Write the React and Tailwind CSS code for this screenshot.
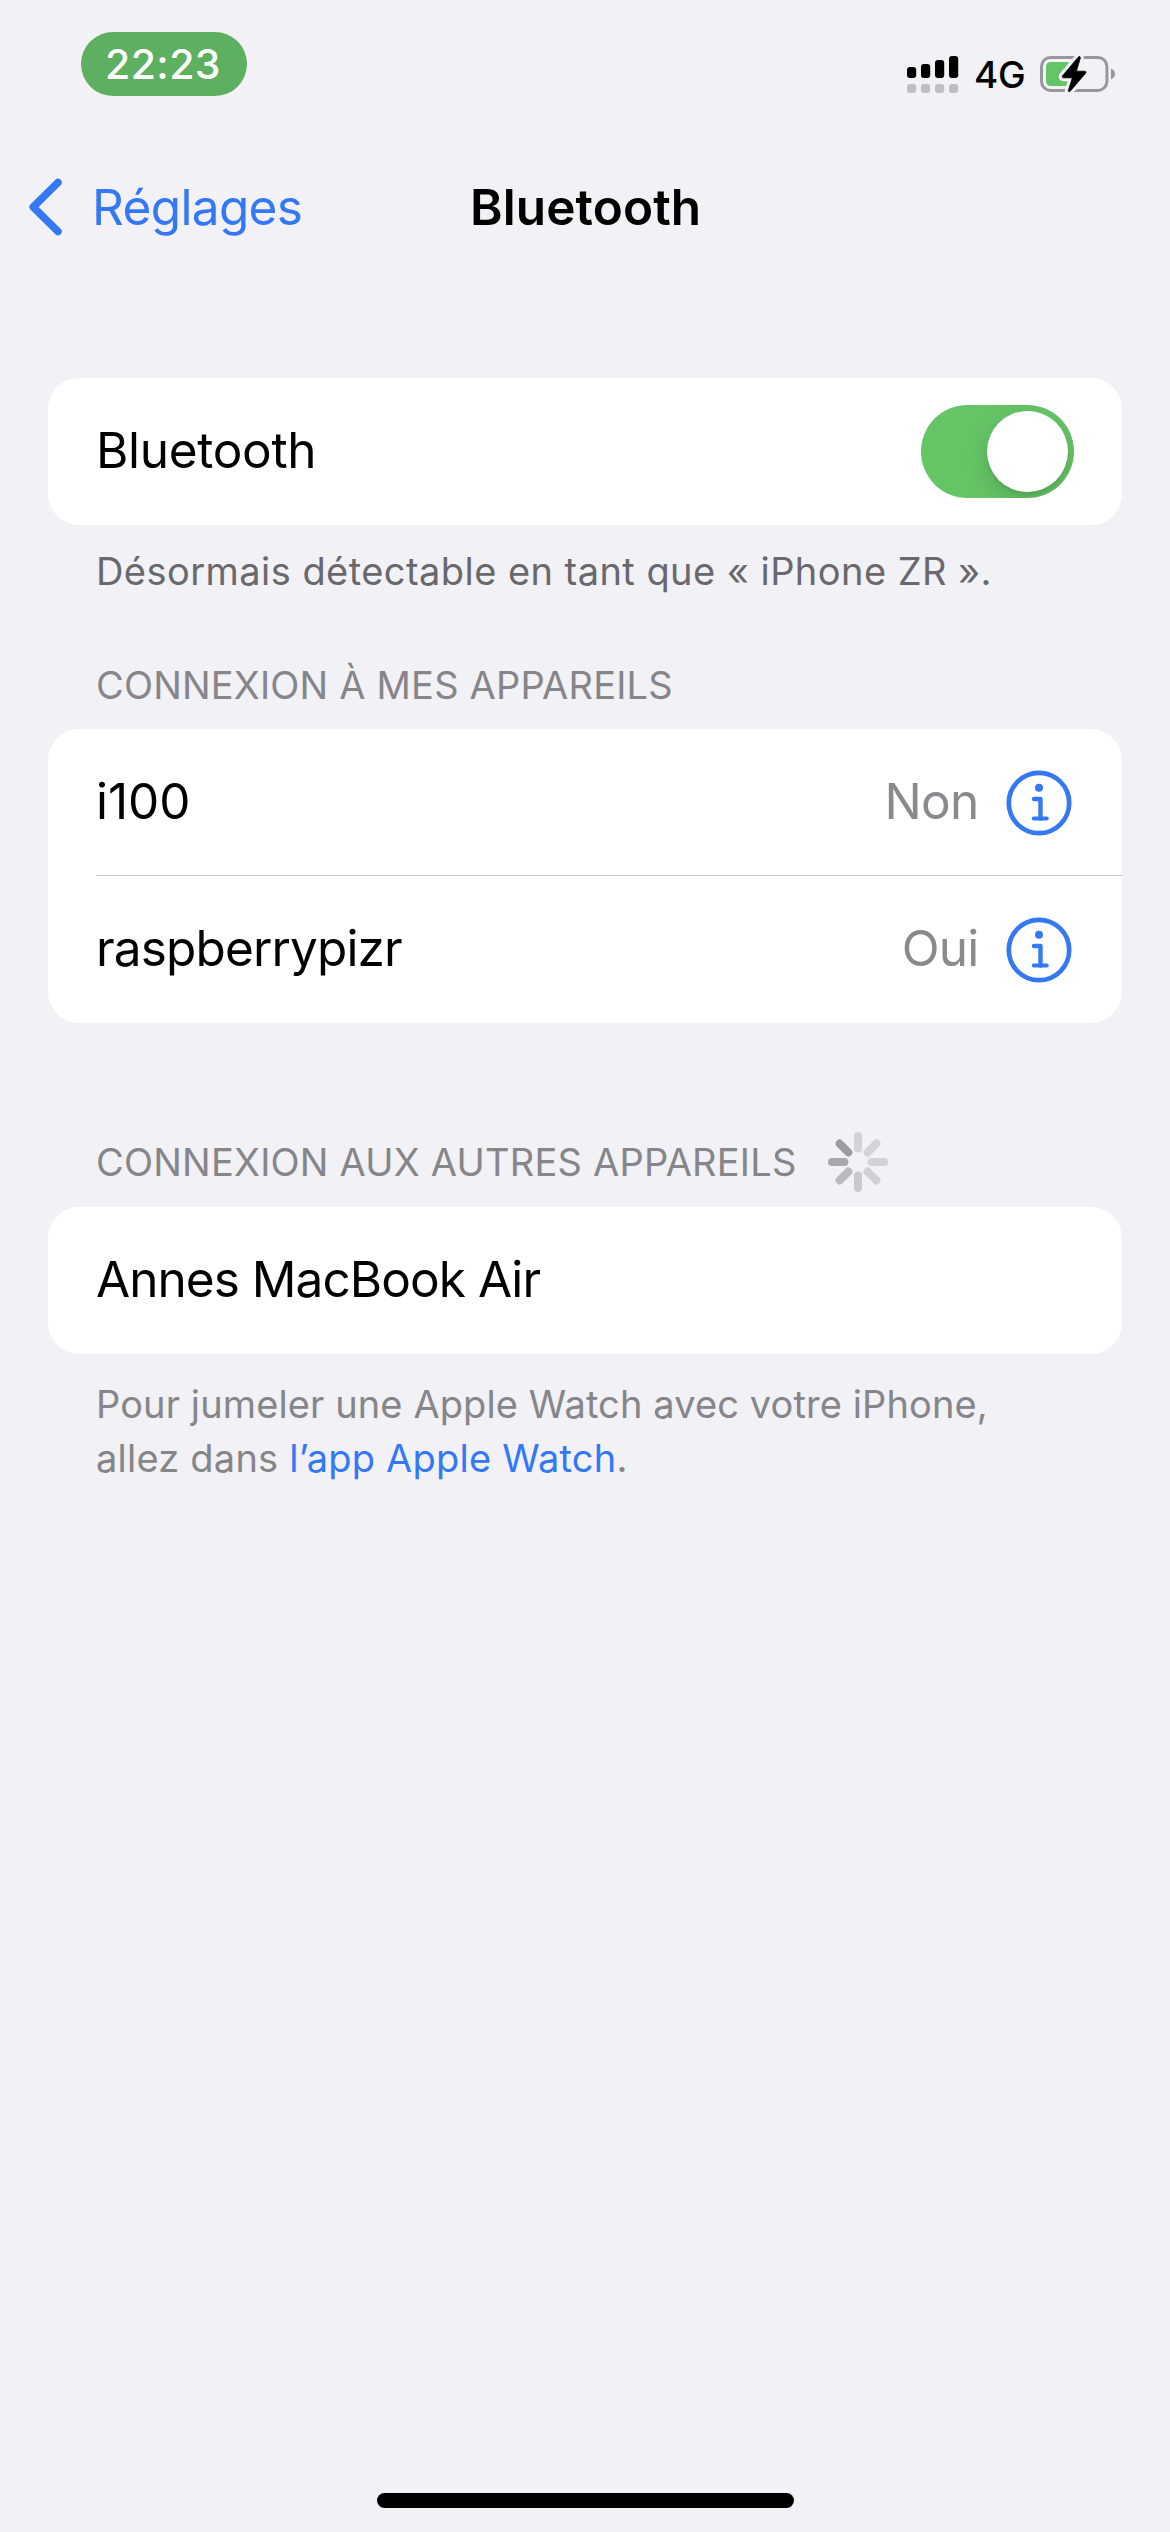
import React from "react";

function SignalIcon() {
  const tops = [67, 64, 60, 56];
  return (
    <svg className="block h-[38px] w-[52px]" viewBox="907 55 52 38">
      {tops.map((top, i) => (
        <g key={top}>
          <rect x={907 + i * 14} y={top} width="9.2" height={78 - top} rx="3" fill="#000" />
          <rect x={907 + i * 14} y="84" width="9.2" height="9" rx="3" fill="#bfbec3" />
        </g>
      ))}
    </svg>
  );
}

function BatteryIcon() {
  const bolt = "M1078.6 56.8 L1062.3 76 Q1061.8 77.6 1063.4 77.8 L1072.4 77.8 L1068.3 90.6 Q1068.6 92.4 1070 91.4 L1085.8 73 Q1086.4 71.4 1084.8 71.2 L1076.4 71.2 L1080.4 57.8 Q1080 55.6 1078.6 56.8 Z";
  return (
    <svg className="block h-10 w-[76px]" viewBox="1040 54 76 40">
      <rect x="1041.5" y="57.4" width="65.4" height="33" rx="9" fill="none" stroke="#98979d" strokeWidth="3" />
      <rect x="1046" y="62" width="26" height="24" rx="4.5" fill="#65c466" />
      <path d="M1111 68.6 Q1115 70.6 1115 74 Q1115 77.4 1111 79.4 Z" fill="#98979d" />
      <path d={bolt} fill="#f1f1f6" stroke="#f1f1f6" strokeWidth="7" strokeLinejoin="round" />
      <path d={bolt} fill="#000" stroke="#000" strokeWidth="0.8" strokeLinejoin="round" />
    </svg>
  );
}

function InfoIcon() {
  return (
    <svg className="block size-[66px]" viewBox="0 0 66 66" fill="none" stroke="#3478f6" strokeLinecap="round" strokeLinejoin="round">
      <circle cx="33" cy="33" r="30.2" strokeWidth="4.7" />
      <circle cx="33" cy="17.7" r="4" fill="#3478f6" stroke="none" />
      <path d="M28 29 H34.5 V48.5" strokeWidth="4.4" />
      <path d="M27.7 48.6 H40.7" strokeWidth="4" />
    </svg>
  );
}

function Spinner() {
  const colors = ["#d3d2d7", "#d3d2d7", "#d3d2d7", "#d1d0d5", "#c9c8cd", "#bab9be", "#a9a8ad", "#9c9ba0"];
  return (
    <svg className="block size-[60px]" viewBox="-30 -30 60 60">
      {colors.map((c, i) => (
        <rect key={i} x="-4" y="-30" width="8" height="20.4" rx="4" fill={c} transform={`rotate(${i * 45})`} />
      ))}
    </svg>
  );
}

function DeviceRow({ name, status, nameClass, statusClass }) {
  return (
    <div className="flex h-[147px] items-center pr-[50.5px] pl-12">
      <span className={nameClass}>{name}</span>
      <span className={statusClass}>{status}</span>
      <InfoIcon />
    </div>
  );
}

export default function App() {
  return (
    <div className="flex h-[2532px] w-[1170px] flex-col overflow-hidden bg-[#f1f1f6] font-['Inter',sans-serif] text-[49.5px] leading-[60px] whitespace-nowrap text-black">
      <header className="flex h-32 items-start justify-between pr-[54px] pl-[81px]">
        <div className="mt-8 flex h-16 w-[166px] items-center justify-center rounded-full bg-[#5db05f] pr-0.5 text-[41px] font-[450] tracking-[0.4px] text-white">
          22:23
        </div>
        <div className="mt-[54px] flex h-10 items-center">
          <SignalIcon />
          <span className="ml-[15px] w-[66px] pt-0.5 text-[37px] font-medium leading-10 tracking-[-0.3px]">4G</span>
          <BatteryIcon />
        </div>
      </header>

      <nav className="grid h-[158px] grid-cols-[470px_1fr] items-center">
        <a className="flex items-center pl-7 text-[#3478f6]">
          <svg className="block h-[58px] w-9" viewBox="0 0 36 58" fill="none" stroke="#3478f6" strokeWidth="7.5" strokeLinecap="round" strokeLinejoin="round">
            <path d="M30 4.5 L5.2 29 L30 53.5" />
          </svg>
          <span className="ml-7 tracking-[-0.65px]">Réglages</span>
        </a>
        <h1 className="font-semibold tracking-[0.1px]">Bluetooth</h1>
      </nav>

      <main className="mt-[92px] flex flex-col px-12">
        <section className="flex h-[147px] items-center justify-between rounded-[31px] bg-white px-12">
          <span className="pb-[3px] tracking-[-0.3px]">Bluetooth</span>
          <div className="flex h-[93px] w-[153px] items-center justify-end overflow-hidden rounded-full bg-[#65c466] p-1.5">
            <div className="size-[81px] rounded-full bg-white shadow-[0_9px_24px_rgba(0,0,0,0.15),0_3px_3px_rgba(0,0,0,0.06)]" />
          </div>
        </section>
        <p className="mt-[19px] h-[54px] pl-12 text-[38px] leading-[54px] tracking-[0.45px] text-[#69686d]">
          Désormais détectable en tant que « iPhone ZR ».
        </p>

        <h2 className="mt-[60px] h-[54px] pl-12 text-[38px] leading-[54px] tracking-[0.19px] text-[#868589]">
          CONNEXION À MES APPAREILS
        </h2>
        <section className="mt-[17px] h-[294px] rounded-[31px] bg-white">
          <DeviceRow
            name="i100"
            status="Non"
            nameClass="flex-1 pb-[3px]"
            statusClass="mr-[27px] pb-[3px] tracking-[-0.7px] text-[#8a8a8e]"
          />
          <div className="-mt-px ml-12 h-px bg-[#c4c4c7]" />
          <DeviceRow
            name="raspberrypizr"
            status="Oui"
            nameClass="flex-1 pb-[3px] tracking-[-0.85px]"
            statusClass="mr-[27px] pb-[3px] tracking-[-0.8px] text-[#8a8a8e]"
          />
        </section>

        <div className="mt-[109px] flex h-[60px] items-center pl-12">
          <h2 className="w-[732px] text-[38px] leading-[54px] tracking-[0.22px] text-[#868589]">
            CONNEXION AUX AUTRES APPAREILS
          </h2>
          <Spinner />
        </div>
        <section className="mt-[15px] flex h-[147px] items-center rounded-[31px] bg-white px-12">
          <span className="pb-[3px] tracking-[-0.95px]">Annes MacBook Air</span>
        </section>
        <p className="mt-[23px] pl-12 text-[38px] leading-[54px] text-[#868589]">
          <span className="tracking-[0.11px]">Pour jumeler une Apple Watch avec votre iPhone,</span>
          <br />
          <span className="tracking-[0.22px]">
            allez dans <a className="text-[#3478f6]">l’app Apple Watch</a>.
          </span>
        </p>
      </main>

      <footer className="mt-auto flex justify-center pb-6">
        <div className="h-[15px] w-[417px] rounded-full bg-black" />
      </footer>
    </div>
  );
}
